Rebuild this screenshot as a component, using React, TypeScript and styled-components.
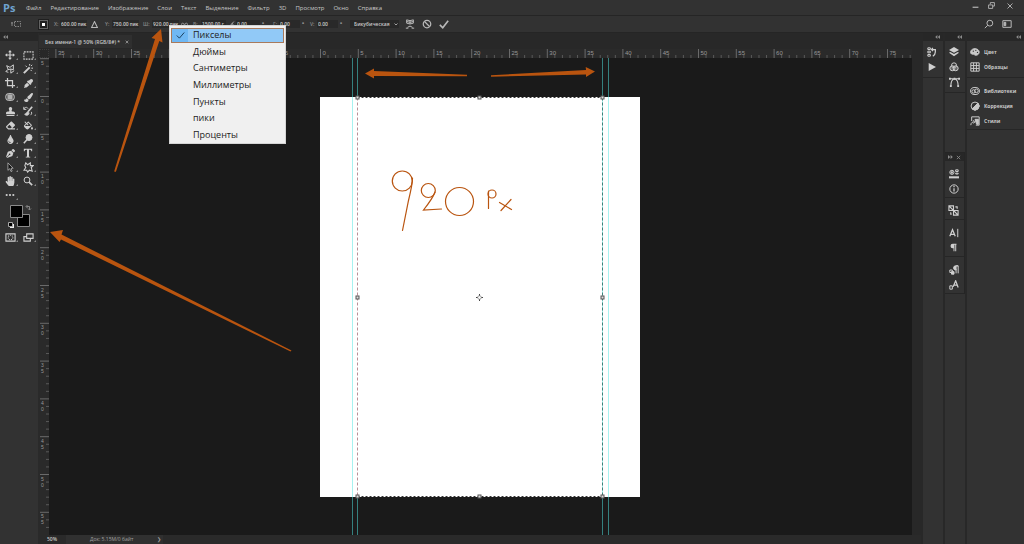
import React, { useEffect, useState } from 'react';
import styled, { createGlobalStyle } from 'styled-components';
import {
  FaStamp, FaHandPaper, FaEraser, FaFillDrip, FaPaintBrush, FaMagic, FaEyeDropper, FaPenNib, FaTint,
} from 'react-icons/fa';

const c = {
  panel: '#323232',
  strip: '#282828',
  line: '#252525',
  canvas: '#1a1a1a',
  icon: '#cfcfcf',
  text: '#c8c8c8',
  dim: '#8a8a8a',
  accent: '#b9540f',
};

const GlobalStyle = createGlobalStyle`
  * { box-sizing: border-box; }
  body { margin: 0; background: ${c.panel}; font-family: "Open Sans", "Noto Sans", sans-serif; color: ${c.text}; }
  button, input, select { font: inherit; color: inherit; border: 0; padding: 0; margin: 0; background: none; }
  svg { display: block; }
`;

const Shell = styled.div`
  position: relative;
  display: flex;
  flex-direction: column;
  min-height: 100vh;
  overflow: hidden;
`;

const MenuBar = styled.header`
  display: flex;
  align-items: center;
  height: 16px;
  padding-left: 3px;
  border-bottom: 1px solid ${c.line};
`;

const Logo = styled.span`
  width: 23px;
  font-size: 11px;
  line-height: 14px;
  font-weight: 700;
  color: #6fa3cf;
`;

const MenuList = styled.nav`
  display: flex;
  flex: 1;
  gap: 9px;
`;

const MenuButton = styled.button`
  font-size: 6px;
  line-height: 14px;
  white-space: nowrap;
`;

const WindowControls = styled.div`
  display: flex;
  align-self: flex-start;
  padding-right: 4px;
`;

const IconButton = styled.button<{ $w?: number; $h?: number }>`
  display: flex;
  flex: none;
  align-items: center;
  justify-content: center;
  width: ${(p) => p.$w ?? 17}px;
  height: ${(p) => p.$h ?? 14}px;
  color: #b8b8b8;
`;

const OptionsBar = styled.div`
  display: flex;
  align-items: center;
  height: 17px;
  padding: 0 7px 0 6px;
  font-size: 5px;
  font-weight: 600;
  border-bottom: 1px solid ${c.line};
`;

const Field = styled.label<{ $w: number; $label: number }>`
  display: flex;
  flex: none;
  align-items: center;
  width: ${(p) => p.$w}px;
  span { width: ${(p) => p.$label}px; color: ${c.dim}; }
  input {
    width: ${(p) => p.$w - p.$label}px;
    height: 8px;
    padding-left: 1px;
    font-family: Roboto, "Open Sans", sans-serif;
    font-weight: 500;
    line-height: 8px;
    background: #292929;
  }
`;

const Degree = styled.span`
  width: 10px;
  padding-left: 2px;
`;

const Combo = styled.div`
  display: flex;
  align-items: center;
  width: 49px;
  height: 8px;
  background: #282828;
  select { flex: 1; min-width: 0; padding-left: 4px; appearance: none; }
`;

const Spacer = styled.div<{ $w?: number }>`
  flex: ${(p) => (p.$w === undefined ? '1' : 'none')};
  width: ${(p) => p.$w ?? 0}px;
`;

const Body = styled.div`
  display: flex;
  flex: 1;
`;

const ToolBar = styled.aside`
  width: 39px;
  border-right: 1px solid #2a2a2a;
`;

const PanelHead = styled.div<{ $end?: boolean }>`
  display: flex;
  align-items: center;
  justify-content: ${(p) => (p.$end ? 'flex-end' : 'flex-start')};
  height: 8px;
  padding: 0 3px;
  background: #272727;
  color: #8c8c8c;
`;

const ToolGrid = styled.div`
  display: grid;
  grid-template-columns: 18px 18px;
  grid-auto-rows: 14px;
  padding: 7px 0 0 1px;
`;

const Tool = styled.button`
  position: relative;
  display: flex;
  align-items: center;
  justify-content: center;
  color: ${c.icon};
  &::after {
    content: '';
    position: absolute;
    right: 1px;
    bottom: 2px;
    border-left: 2px solid transparent;
    border-bottom: 2px solid #888;
  }
`;

const Swatches = styled.button`
  grid-column: span 2;
  grid-row: span 2;
`;

const Document = styled.main`
  display: grid;
  flex: 1;
  min-width: 0;
  grid-template: 16px 9px 1fr 9px / 10px 1fr 9px;
  background: ${c.strip};
`;

const TabStrip = styled.div`
  display: flex;
  grid-column: 1 / -1;
  align-items: flex-end;
  padding-bottom: 1px;
`;

const Tab = styled.div`
  display: flex;
  align-items: center;
  width: 93px;
  height: 13px;
  padding-left: 6px;
  background: #2f2f2f;
  font-size: 5px;
  font-weight: 600;
  white-space: nowrap;
`;

const Ruler = styled.div<{ $side?: boolean }>`
  grid-column: ${(p) => (p.$side ? '1' : '2')};
  overflow: hidden;
  background: #2a2a2a;
  svg { width: 100%; height: 100%; }
  text {
    font-family: "Liberation Sans", sans-serif;
    font-size: ${(p) => (p.$side ? 5 : 6)}px;
    fill: #999;
  }
`;

const Corner = styled.div`
  border: 1px dotted #3c3c3c;
`;

const Canvas = styled.div`
  position: relative;
  overflow: hidden;
  background: ${c.canvas};
`;

const Artboard = styled.div`
  position: absolute;
  left: 271px;
  top: 39px;
  width: 320px;
  height: 400px;
  background: #fff;
`;

const Guide = styled.div<{ $x: number }>`
  position: absolute;
  left: ${(p) => p.$x}px;
  top: 0;
  bottom: 0;
  width: 1px;
  background: rgba(80, 230, 225, 0.5);
`;

const TransformBox = styled.svg`
  position: absolute;
  left: 305px;
  top: 36px;
  width: 251px;
  height: 406px;
`;

const StatusBar = styled.footer`
  display: flex;
  grid-column: 1 / -1;
  align-items: center;
  font-size: 5px;
  line-height: 9px;
  background: #2a2a2a;
`;

const Zoom = styled.span`
  width: 27px;
  padding-left: 8px;
  font-weight: 600;
`;

const DocInfo = styled.span`
  display: flex;
  align-items: center;
  justify-content: space-between;
  width: 97px;
  padding: 0 2px 0 24px;
  color: #a0a0a0;
  background: #303030;
`;

const Dock = styled.aside<{ $w: number }>`
  width: ${(p) => p.$w}px;
  border-left: 2px solid #282828;
`;

const Group = styled.div<{ $low?: boolean }>`
  display: flex;
  flex-direction: column;
  align-items: stretch;
  padding: ${(p) => (p.$low ? '5px 0 1px' : '3px 0')};
  border-bottom: 1px solid #262626;
`;

const DockButton = styled.button`
  display: flex;
  align-items: center;
  justify-content: center;
  height: 15px;
  padding-right: 2px;
  color: ${c.icon};
`;

const PanelButton = styled.button`
  display: flex;
  align-items: center;
  gap: 4px;
  height: 15px;
  padding-left: 3px;
  font-size: 5px;
  font-weight: 700;
`;

const Palette = styled.section`
  margin-top: 59px;
  border: 1px solid #252525;
  border-left: 0;
  border-bottom: 0;
`;

const UnitMenu = styled.ul`
  position: absolute;
  left: 169px;
  top: 25px;
  display: grid;
  grid-template-rows: repeat(7, 1fr);
  width: 117px;
  height: 119px;
  margin: 0;
  padding: 1px 1px 0;
  list-style: none;
  background: #f0f0f0;
  border: 1px solid #d5d5d5;
  color: #222;
  font-size: 9px;
  li { display: flex; padding: 2px 1px; }
`;

const UnitOption = styled.button<{ $on?: boolean }>`
  display: flex;
  flex: 1;
  align-items: center;
  text-align: left;
  line-height: 12px;
  background: ${(p) => (p.$on ? '#91c9f7' : 'transparent')};
  outline: ${(p) => (p.$on ? '1px solid #a87a5c' : '0')};
`;

const Check = styled.span<{ $on?: boolean }>`
  display: flex;
  align-items: center;
  justify-content: center;
  width: 16px;
  height: 100%;
  margin-right: 5px;
  background: ${(p) => (p.$on ? '#6fb8f4' : 'transparent')};
`;

const Annotations = styled.svg`
  position: absolute;
  left: 0;
  top: 0;
  width: 1024px;
  height: 544px;
  pointer-events: none;
`;

type IconProps = { children: React.ReactNode; size?: number; fill?: boolean };
const Icon = ({ children, size = 10, fill = false }: IconProps) => (
  <svg width={size} height={size} viewBox="0 0 12 12" fill={fill ? 'currentColor' : 'none'}
    stroke={fill ? 'none' : 'currentColor'} strokeWidth="1.2">{children}</svg>
);

const Chevrons = ({ right = false }: { right?: boolean }) => (
  <svg width="5" height="4" viewBox="0 0 5 4" fill="currentColor">
    {right ? <path d="M0 0l2.2 2L0 4zM2.6 0l2.2 2-2.2 2z" /> : <path d="M2.4 0v4L.2 2zM5 0v4L2.8 2z" />}
  </svg>
);

const tools: [string, React.ReactNode][] = [
  ['Перемещение', <Icon fill><path d="M6 0l2.2 2.6H6.7v2.7h2.7V3.8L12 6 9.400 8.200V6.700H6.700v2.700h1.500L6 12 3.800 9.400h1.500V6.700H2.600v1.500L0 6l2.600-2.200v1.500h2.700V2.600H3.800z" /></Icon>],
  ['Прямоугольная область', <Icon size={11}><rect x="1" y="2" width="10" height="8" strokeDasharray="2 1" /></Icon>],
  ['Лассо', <Icon><path d="M2 2l4 2 4-3v6L7 6 3 7 1 9l3 1M2 2l2 5M7 6v5l4-3" /></Icon>],
  ['Волшебная палочка', <Icon><path d="M1 11l7-7" strokeWidth="2.400" /><path d="M8 0v2M3 2l1.500 1.500M11 1L9.500 2.500M10 5h2M9 7l1.500 1.500" /></Icon>],
  ['Рамка', <Icon><path d="M3 0v9h9M0 3h9v9" strokeWidth="1.500" /></Icon>],
  ['Пипетка', <FaEyeDropper size={9} />],
  ['Заплатка', <Icon><rect x="1" y="2" width="10" height="8" rx="3" /><rect x="3.500" y="3.500" width="5" height="5" fill="currentColor" opacity=".8" /></Icon>],
  ['Кисть', <FaPaintBrush size={9} />],
  ['Штамп', <FaStamp size={9} />],
  ['Архивная кисть', <Icon><path d="M11 1L6 7" strokeWidth="2" /><path d="M6 7c-2 0-2 3-4 3 2 2 6 1 5-2z" fill="currentColor" /><path d="M1 4c1-3 4-3 5-1M1 1v3h3M10 7c1 2 0 3-1 4" /></Icon>],
  ['Ластик', <FaEraser size={9} />],
  ['Заливка', <FaFillDrip size={9} />],
  ['Размытие', <FaTint size={9} />],
  ['Осветлитель', <Icon><circle cx="7.200" cy="4.200" r="3.600" fill="currentColor" /><path d="M5 6.500L1 11" strokeWidth="1.800" /></Icon>],
  ['Перо', <FaPenNib size={9} />],
  ['Текст', <Icon fill><path d="M1 1h10v3h-1C9.800 2.500 9 2.200 7.200 2.200V9.500c0 .8.500 1 1.500 1.100V11.400H3.300v-.8c1-.1 1.500-.3 1.500-1.100V2.200C3 2.200 2.200 2.500 2 4H1z" /></Icon>],
  ['Выделение контура', <Icon><path d="M3.500 1v9l2.200-2 1.500 3.500 1.400-.6L7.200 7.500h2.600z" fill="#161616" strokeWidth=".8" /></Icon>],
  ['Произвольная фигура', <Icon size={11}><path d="M3 1l2 2 3-2v3h3L9 6l1 4-3-1-2 2-1-2H1l2-3-1-2z" /></Icon>],
  ['Рука', <FaHandPaper size={10} />],
  ['Масштаб', <Icon><circle cx="4.800" cy="4.800" r="3.500" /><path d="M7.300 7.300L11 11" strokeWidth="2" /></Icon>],
  ['Другие инструменты', <Icon fill><circle cx="2" cy="6" r="1.300" /><circle cx="6" cy="6" r="1.300" /><circle cx="10" cy="6" r="1.300" /></Icon>],
];

const menus = ['Файл', 'Редактирование', 'Изображение', 'Слои', 'Текст', 'Выделение', 'Фильтр', '3D', 'Просмотр', 'Окно', 'Справка'];
const units = ['Пикселы', 'Дюймы', 'Сантиметры', 'Миллиметры', 'Пункты', 'пики', 'Проценты'];

/* Screen distance of one ruler unit at 50% zoom. */
const UNIT = 7.56;

const useWindowSize = () => {
  const [size, setSize] = useState({ w: window.innerWidth, h: window.innerHeight });
  useEffect(() => {
    const update = () => setSize({ w: window.innerWidth, h: window.innerHeight });
    window.addEventListener('resize', update);
    return () => window.removeEventListener('resize', update);
  }, []);
  return size;
};

const range = (from: number, to: number) => Array.from({ length: Math.max(0, to - from + 1) }, (_, i) => from + i);

/* Ticks every unit with a longer, labelled one at each fifth. */
const HorizontalRuler = ({ length }: { length: number }) => (
  <svg aria-hidden="true">
    {range(-35, Math.floor((length - 271) / UNIT)).map((n) => {
      const x = 271.5 + n * UNIT;
      const major = n % 5 === 0;
      return (
        <g key={n}>
          <path d={`M${x} ${major ? 0 : 6}V9`} stroke={major ? '#6a6a6a' : '#5a5a5a'} />
          {major && <text x={x + 2} y="6">{Math.abs(n)}</text>}
        </g>
      );
    })}
  </svg>
);

const VerticalRuler = ({ length }: { length: number }) => (
  <svg aria-hidden="true">
    {range(-5, Math.floor((length - 39) / UNIT)).map((n) => {
      const y = 38.5 + n * UNIT;
      const major = n % 5 === 0;
      return (
        <g key={n}>
          <path d={`M${major ? 1 : 7} ${y}H10`} stroke={major ? '#6a6a6a' : '#5a5a5a'} />
          {major && String(Math.abs(n)).split('').map((d, i) => <text key={i} x="2" y={y + 6 + i * 6}>{d}</text>)}
        </g>
      );
    })}
  </svg>
);

const NumberField = ({ label, name, value, w, lw }: { label: string; name: string; value: string; w: number; lw: number }) => (
  <Field $w={w} $label={lw}><span>{label}</span><input aria-label={name} defaultValue={value} /></Field>
);

export default function App() {
  const { w, h } = useWindowSize();
  return (
    <Shell>
      <GlobalStyle />
      <MenuBar>
        <Logo>Ps</Logo>
        <MenuList>{menus.map((m) => <MenuButton key={m}>{m}</MenuButton>)}</MenuList>
        <WindowControls>
          <IconButton aria-label="Свернуть" $w={15} $h={11}><Icon size={7}><path d="M1 9h10" strokeWidth="2" /></Icon></IconButton>
          <IconButton aria-label="Восстановить" $w={17} $h={11}><Icon size={7}><path d="M4 4V1h7v6H8M1 5h7v6H1z" strokeWidth="1.500" /></Icon></IconButton>
          <IconButton aria-label="Закрыть" $w={20} $h={11}><Icon size={6}><path d="M1 1l10 10M11 1L1 11" strokeWidth="1.800" /></Icon></IconButton>
        </WindowControls>
      </MenuBar>

      <OptionsBar>
        <IconButton aria-label="Трансформирование" $w={20}><svg width="10" height="8" viewBox="0 0 10 8" fill="none" stroke="#888"><path d="M3.500 1.500h6v5h-6z" strokeDasharray="1.500 1" /><path d="M1 2v4M0 3h2" /></svg></IconButton>
        <Spacer $w={12} />
        <IconButton aria-label="Опорная точка" $w={11}>
          <svg width="11" height="11" viewBox="0 0 11 11"><path fill="#1f1f1f" d="M0 0h11v11H0z" /><path fill="none" stroke="#aaa" strokeDasharray="1 1" d="M1.500 1.500h8v8h-8z" /><path fill="#fff" d="M4 4h3v3H4z" /></svg>
        </IconButton>
        <Spacer $w={5} />
        <NumberField label="X:" name="X" value="600.00 пик" w={33} lw={6} />
        <IconButton aria-label="Относительное положение" $w={15}><Icon size={7}><path d="M6 1l5 10H1z" strokeWidth="1.800" /></Icon></IconButton>
        <Spacer $w={3} />
        <NumberField label="Y:" name="Y" value="750.00 пик" w={34} lw={7} />
        <Spacer $w={4} />
        <NumberField label="Ш:" name="Ширина" value="920.00 пик" w={36} lw={9} />
        <IconButton aria-label="Сохранять пропорции" $w={11}><Icon size={7}><circle cx="3" cy="6" r="2.300" /><circle cx="9" cy="6" r="2.300" /></Icon></IconButton>
        <Spacer $w={3} />
        <NumberField label="В:" name="Высота" value="1500.00 г" w={33} lw={8} />
        <IconButton aria-label="Угол" $w={10}><Icon size={7}><path d="M11 11H1L10 1M7 4c2 2 2 4 2 7" strokeWidth="1.500" /></Icon></IconButton>
        <NumberField label="" name="Поворот" value="0.00" w={24} lw={0} />
        <Degree>°</Degree><Spacer $w={3} />
        <NumberField label="Г:" name="Наклон по горизонтали" value="0.00" w={27} lw={6} />
        <Degree>°</Degree>
        <NumberField label="V:" name="Наклон по вертикали" value="0.00" w={28} lw={7} />
        <Degree>°</Degree><Spacer $w={2} />
        <Combo>
          <select aria-label="Интерполяция"><option>Бикубическая</option></select>
          <Icon size={6}><path d="M3 5l3 3 3-3" strokeWidth="1.500" /></Icon>
        </Combo>
        <Spacer $w={2} />
        <IconButton aria-label="Деформация"><Icon><path d="M2 1q4 2 8 0v4q-4 2-8 0zM2 3q4 2 8 0M6 2v4M3 10q3-3 6 0M1 11h3M8 11h3" /></Icon></IconButton>
        <IconButton aria-label="Отменить"><Icon><circle cx="6" cy="6" r="4.500" strokeWidth="1.500" /><path d="M3 3l6 6" strokeWidth="1.500" /></Icon></IconButton>
        <IconButton aria-label="Применить"><Icon><path d="M1 7l3.500 3.500L11 2" strokeWidth="2" /></Icon></IconButton>
        <Spacer />
        <IconButton aria-label="Поиск"><Icon><circle cx="7" cy="5" r="3.500" /><path d="M4.500 7.500L1 11" /></Icon></IconButton>
        <IconButton aria-label="Рабочая среда" $w={20}><Icon><path d="M1 2h10v8H1z" /><path d="M2.500 4h2v4h-2z" fill="currentColor" /></Icon></IconButton>
      </OptionsBar>

      <Body>
        <ToolBar>
          <PanelHead><Chevrons /></PanelHead>
          <ToolGrid>
            {tools.map(([name, icon]) => <Tool key={name} aria-label={name}>{icon}</Tool>)}
            <span />
            <Swatches aria-label="Основной и фоновый цвета">
              <svg width="36" height="28" viewBox="0 0 36 28">
                <path d="M16.500 12.500h12v12h-12z" fill="#000" stroke="#8a8a8a" />
                <path d="M9.500 3.500h12v12h-12z" fill="#000" stroke="#8a8a8a" />
                <path d="M25.500 4.500h3v3M26.500 3l-1.500 1.500 1.500 1.500M27 6.500l1.500 1.500L30 6.500" fill="none" stroke="#999" strokeWidth=".8" />
                <path d="M9 22h4v4H9z" fill="#eee" /><path d="M7.500 20.500h4v4h-4z" fill="#000" stroke="#aaa" />
              </svg>
            </Swatches>
            <Tool aria-label="Быстрая маска"><Icon size={11}><path d="M1 2h10v8H1z" /><circle cx="6" cy="6" r="2.500" strokeDasharray="1 1" /></Icon></Tool>
            <Tool aria-label="Режим экрана"><Icon size={11}><path d="M4 2h7v5H4zM4 5H1v5h7V7" /></Icon></Tool>
          </ToolGrid>
        </ToolBar>

        <Document>
          <TabStrip>
            <Tab>Без имени-1 @ 50% (RGB/8#) *
              <IconButton aria-label="Закрыть документ" $w={13} $h={13}><Icon size={4}><path d="M2 2l8 8M10 2l-8 8" strokeWidth="2" /></Icon></IconButton>
            </Tab>
          </TabStrip>
          <Corner />
          <Ruler><HorizontalRuler length={w - 161} /></Ruler>
          <span />
          <Ruler $side><VerticalRuler length={h - 68} /></Ruler>
          <Canvas>
            <Artboard />
            {[303, 308, 553, 559].map((x) => <Guide key={x} $x={x} />)}
            <TransformBox viewBox="0 0 251 406">
              <path d="M3.500 3.500V403" stroke="#fff" />
              <path d="M3.500 3.500V403" stroke="#b98f96" strokeDasharray="3 2" />
              <path d="M248.500 3.500V403" stroke="#3f7f78" strokeDasharray="3 2" />
              <path d="M3.500 3.500H248.500M3.500 402.500H248.500" stroke="#333" strokeDasharray="2 2" />
              {[3.5, 125.5, 248.5].flatMap((x) => [3.5, 203.5, 402.5].map((y) => (
                x === 125.5 && y === 203.5 ? null
                  : <rect key={`${x}-${y}`} x={x - 1.5} y={y - 1.5} width="3" height="3" fill="#ddd" stroke="#555" />
              )))}
              <path d="M125.500 200v2M125.500 205v2M122 203.500h2M127 203.500h2" stroke="#444" />
              <circle cx="125.500" cy="203.500" r="1.800" fill="#fff" stroke="#777" strokeWidth=".7" />
            </TransformBox>
          </Canvas>
          <span />
          <StatusBar>
            <Zoom>50%</Zoom>
            <DocInfo><span>Док: 5.15M/0 байт</span><span>❯</span></DocInfo>
          </StatusBar>
        </Document>

        <Dock $w={22}>
          <PanelHead $end><Chevrons /></PanelHead>
          <Group>
            <DockButton aria-label="История"><Icon><path d="M1 1h3v2H1zM1 5h3v2H1zM1 9h3v2H1z" /><path d="M6 3h4v3q0 3-3 5M7 1L5.500 3 7 5" strokeWidth="1.500" /></Icon></DockButton>
            <DockButton aria-label="Операции"><Icon size={8} fill><path d="M1 0l11 6-11 6z" /></Icon></DockButton>
          </Group>
        </Dock>
        <Dock $w={22}>
          <PanelHead $end><Chevrons /></PanelHead>
          <Group>
            <DockButton aria-label="Слои"><Icon fill><path d="M6 0l6 3.500-6 3.500-6-3.500z" /><path d="M0 7l1.500-1L6 8.500 10.500 6 12 7l-6 4z" /></Icon></DockButton>
            <DockButton aria-label="Каналы"><Icon><circle cx="6" cy="4" r="3" /><circle cx="4" cy="7.500" r="3" fill="#9a9a9a" fillOpacity=".5" /><circle cx="8" cy="7.500" r="3" fill="#9a9a9a" fillOpacity=".5" /></Icon></DockButton>
            <DockButton aria-label="Контуры"><Icon size={11}><path d="M2 11q0-7 4-8 4 1 4 8M1 3h10" /><path d="M0 2h2v2H0zM5 2h2v2H5zM10 2h2v2h-2zM1 10h2v2H1zM9 10h2v2H9z" fill="currentColor" stroke="none" /></Icon></DockButton>
          </Group>
          <Palette>
            <PanelHead><Chevrons right /><Spacer /><Icon size={5}><path d="M2 2l8 8M10 2l-8 8" strokeWidth="2" /></Icon></PanelHead>
            <Group $low>
              <DockButton aria-label="Свойства"><Icon><circle cx="3.500" cy="4" r="2.500" /><path d="M2 4h3M3.500 2v4" /><path d="M8 1h3v2H8zM8 5h3v1H8z" /><path d="M0 10h12" strokeWidth="2.500" /></Icon></DockButton>
              <DockButton aria-label="Инфо"><Icon><circle cx="6" cy="6" r="5" /><path d="M6 5v4M6 2.500v1.300" strokeWidth="1.500" /></Icon></DockButton>
            </Group>
            <Group $low>
              <DockButton aria-label="Источник клонов"><Icon size={11}><path d="M1 1h5v5H1zM6 6h5v5H6zM1 1l5 5M6 6l5 5M3 8v2h1M8 2h2v2" /></Icon></DockButton>
            </Group>
            <Group $low>
              <DockButton aria-label="Символ"><Icon><path d="M1 10L4.200 2 7.500 10M2.200 7.500h4" strokeWidth="1.500" /><path d="M10.500 1v10" /></Icon></DockButton>
              <DockButton aria-label="Абзац"><Icon fill size={9}><path d="M10 1H5a3 3 0 000 6h1v4h1.300V2.300h1V11H9.600V2.300H10z" /></Icon></DockButton>
            </Group>
            <Group $low>
              <DockButton aria-label="Стили абзацев"><Icon><path d="M11 1H8a2.500 2.500 0 000 5h.5V1z" fill="currentColor" /><path d="M8.500 5v5M11 1v9" /><path d="M3 8h3v3H3z" fill="currentColor" /><path d="M1 6h3v3H1z" /></Icon></DockButton>
              <DockButton aria-label="Стили символов"><Icon><path d="M5 8L8 1l3 8M6 6h4" strokeWidth="1.500" /><path d="M1 7h3v4H1z" /></Icon></DockButton>
            </Group>
          </Palette>
        </Dock>
        <Dock $w={59}>
          <PanelHead $end><Chevrons /></PanelHead>
          <Group>
            <PanelButton><Icon><path d="M6 2C2 2 0 5 1 7.500c1 2 3 .5 4 1.500 1 2 6 1 6-3 0-2-2-4-5-4z" fill="currentColor" /><circle cx="4" cy="5" r=".8" fill="#323232" stroke="none" /><circle cx="7" cy="4" r=".8" fill="#323232" stroke="none" /><circle cx="9" cy="6.500" r=".8" fill="#323232" stroke="none" /></Icon>Цвет</PanelButton>
            <PanelButton><Icon><path d="M1 1h10v10H1zM4.300 1v10M7.700 1v10M1 4.300h10M1 7.700h10" /></Icon>Образцы</PanelButton>
          </Group>
          <Group $low>
            <PanelButton><Icon><ellipse cx="6" cy="6" rx="5.300" ry="4.300" /><circle cx="4.300" cy="6.500" r="2" /><circle cx="7.700" cy="5.800" r="2.200" /></Icon>Библиотеки</PanelButton>
            <PanelButton><Icon><circle cx="6" cy="6" r="4.700" /><path d="M9.500 2.500A4.700 4.700 0 012.500 9.500z" fill="currentColor" /></Icon>Коррекция</PanelButton>
            <PanelButton><Icon><path d="M2 6V1h9v10H7" /><path d="M6 4h4v6H8z" fill="currentColor" /><path d="M1 11c0-3 2-4 4-4M4 5l2 2-2 2" /></Icon>Стили</PanelButton>
          </Group>
        </Dock>
      </Body>

      <UnitMenu>
        {units.map((u, i) => (
          <li key={u}>
            <UnitOption $on={i === 0}>
              <Check $on={i === 0}>{i === 0 && <Icon size={9}><path d="M1 6l3.500 3.500L11 2" stroke="#14344f" /></Icon>}</Check>
              {u}
            </UnitOption>
          </li>
        ))}
      </UnitMenu>

      <Annotations viewBox="0 0 1024 544" fill={c.accent}>
        <path d="M115 172l-.8-.8L155 39l-3.500-1L161 29l1.500 13.500-3.200-1.500L116 171.500z" />
        <path d="M291.500 350.500l-1 1L61 239.500l-1.500 2.500L50 232l13-2-1.500 4.500z" />
        <path d="M467 74.800v1.400L374 76v2.500l-9-5 9-5V71z" />
        <path d="M491 75.300l95-5.300-.3-3 9.300 4.500-9 5.500v-2.500L491 76.700z" />
        <g fill="none" stroke={c.accent} strokeWidth="1.200" strokeLinecap="round">
          <circle cx="402.300" cy="181" r="10" />
          <path d="M412.500 178q0 6-4 22.500l-6 30" />
          <circle cx="428.300" cy="190.500" r="7" />
          <path d="M435 192q-2 6-11.500 18l18-1" />
          <circle cx="459.500" cy="201.500" r="14" />
          <circle cx="492" cy="194" r="4" />
          <path d="M488.500 191v17.500M499.500 202.500l12 7M511 199.500L501 210.500" />
        </g>
      </Annotations>
    </Shell>
  );
}
